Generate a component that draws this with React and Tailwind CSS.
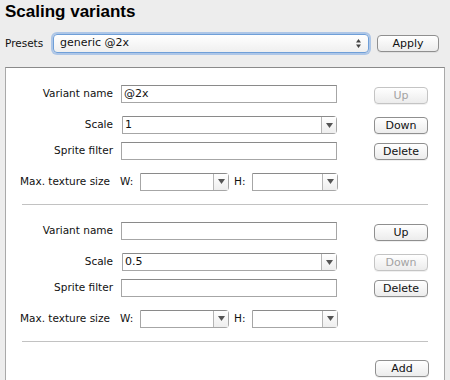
import React from "react";

const font = { fontFamily: '"DejaVu Sans", "Lucida Grande", sans-serif' };

function Button({ children, disabled, className = "" }) {
  return (
    <div
      className={`flex h-[17px] w-[54px] items-center justify-center rounded-[4px] border bg-gradient-to-b from-white to-[#ececec] text-[11px] leading-none shadow-[0_1px_0_rgba(0,0,0,0.06)] ${
        disabled ? "border-[#c4c4c4] text-[#a3a3a3]" : "border-[#8f8f8f] text-[#111]"
      } ${className}`}
    >
      {children}
    </div>
  );
}

function TextField({ value, className = "" }) {
  return (
    <div
      className={`flex h-[18px] items-center border border-[#a6a6a6] border-t-[#8a8a8a] bg-white pl-[2px] text-[11px] text-[#111] ${className}`}
    >
      {value}
    </div>
  );
}

function Arrow() {
  return (
    <svg width="7" height="5" viewBox="0 0 7 5">
      <path d="M0 0H7L3.5 5Z" fill="#555" />
    </svg>
  );
}

function Combo({ value, className = "" }) {
  return (
    <div
      className={`flex h-[18px] items-stretch rounded-r-[4px] border border-[#a6a6a6] border-t-[#8a8a8a] bg-white text-[11px] text-[#111] ${className}`}
    >
      <div className="flex flex-1 items-center pl-[2px]">{value}</div>
      <div className="flex w-[15px] items-center justify-center border-l border-[#b5b5b5] bg-gradient-to-b from-white to-[#eeeeee]">
        <Arrow />
      </div>
    </div>
  );
}

function Block({ name, scale, upDisabled, downDisabled }) {
  return (
    <div>
      <div className="flex h-[18px] items-center">
        <div className="w-[107px] text-right">Variant name</div>
        <TextField value={name} className="ml-[8px] w-[216px]" />
        <Button disabled={upDisabled} className="ml-[37px] mt-[3px]">
          Up
        </Button>
      </div>
      <div className="mt-[13px] flex h-[18px] items-center">
        <div className="w-[107px] text-right">Scale</div>
        <Combo value={scale} className="ml-[9px] w-[215px]" />
        <Button disabled={downDisabled} className="ml-[37px]">
          Down
        </Button>
      </div>
      <div className="mt-[8px] flex h-[18px] items-center">
        <div className="w-[107px] text-right">Sprite filter</div>
        <TextField className="ml-[8px] w-[216px]" />
        <Button className="ml-[37px]">Delete</Button>
      </div>
      <div className="mt-[12px] flex h-[19px] items-center">
        <div className="w-[104px] whitespace-nowrap text-right">Max. texture size</div>
        <div className="ml-[10px] w-[20px]">W:</div>
        <Combo className="w-[89px]" />
        <div className="ml-[5px] w-[18px]">H:</div>
        <Combo className="w-[86px]" />
      </div>
      <div className="ml-[16px] mt-[13px] h-px w-[406px] bg-[#c2c2c2]" />
    </div>
  );
}

export default function App() {
  return (
    <div
      className="h-[380px] w-[450px] overflow-hidden bg-[#ededed] text-[10.5px] text-[#111]"
      style={font}
    >
      <div
        className="pl-[5px] pt-[2px] text-[17px] font-bold leading-[20px] text-black"
        style={{ fontFamily: '"Liberation Sans", Arial, sans-serif' }}
      >
        Scaling variants
      </div>
      <div className="mt-[12px] flex h-[19px] items-center">
        <div className="w-[53px] pl-[5px]">Presets</div>
        <div className="flex h-[19px] w-[316px] items-center rounded-[4px] border border-[#6f9fd8] bg-gradient-to-b from-white to-[#efefef] pl-[6px] text-[11px] shadow-[0_0_0_2px_rgba(120,165,225,0.55)]">
          <span className="flex-1">generic @2x</span>
          <svg className="mr-[7px]" width="5" height="9" viewBox="0 0 5 9">
            <path d="M0 3.5L2.5 0L5 3.5Z M0 5.5L2.5 9L5 5.5Z" fill="#444" />
          </svg>
        </div>
        <Button className="ml-[8px] w-[62px]">Apply</Button>
      </div>
      <div className="ml-[5px] mt-[14px] h-[400px] w-[440px] border border-[#a9a9a9] border-t-[#8a8a8a] bg-white">
        <div className="pt-[17px]">
          <Block name="@2x" scale="1" upDisabled />
        </div>
        <div className="pt-[17px]">
          <Block scale="0.5" downDisabled />
        </div>
        <div className="mt-[18px] flex">
          <Button className="ml-[369px]">Add</Button>
        </div>
      </div>
    </div>
  );
}
